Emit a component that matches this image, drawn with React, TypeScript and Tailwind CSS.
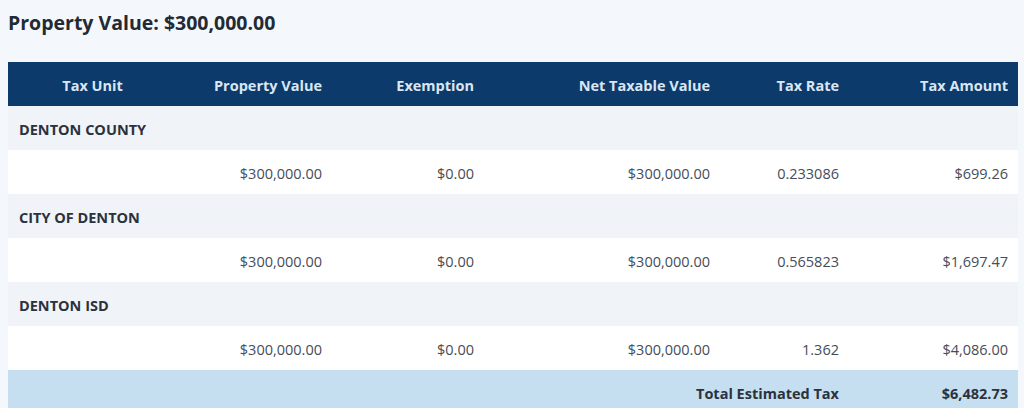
import React from 'react';

interface TaxUnit {
  name: string;
  propertyValue: string;
  exemption: string;
  netTaxable: string;
  rate: string;
  amount: string;
}

const units: TaxUnit[] = [
  { name: 'DENTON COUNTY', propertyValue: '$300,000.00', exemption: '$0.00', netTaxable: '$300,000.00', rate: '0.233086', amount: '$699.26' },
  { name: 'CITY OF DENTON', propertyValue: '$300,000.00', exemption: '$0.00', netTaxable: '$300,000.00', rate: '0.565823', amount: '$1,697.47' },
  { name: 'DENTON ISD', propertyValue: '$300,000.00', exemption: '$0.00', netTaxable: '$300,000.00', rate: '1.362', amount: '$4,086.00' },
];

const cell = 'h-[44px] px-[10px] pt-[3px] text-right';

export default function App() {
  return (
    <div className="min-h-screen bg-[#f4f8fd] pl-[8px] pt-[9px] font-['Open_Sans',sans-serif]">
      <h2 className="text-[19.5px] font-bold leading-[28px] text-[#232a33]">Property Value: $300,000.00</h2>

      <table className="mt-[25px] w-[1010px] table-fixed border-collapse text-[14.5px]">
        <colgroup>
          <col className="w-[169px]" />
          <col className="w-[155px]" />
          <col className="w-[152px]" />
          <col className="w-[236px]" />
          <col className="w-[129px]" />
          <col />
        </colgroup>
        <thead>
          <tr className="bg-[#0b3a6b] text-[#dbe6f3] font-bold">
            <th className="h-[44px] px-[10px] pt-[3px] text-center">Tax Unit</th>
            <th className={cell}>Property Value</th>
            <th className={cell}>Exemption</th>
            <th className={cell}>Net Taxable Value</th>
            <th className={cell}>Tax Rate</th>
            <th className={cell}>Tax Amount</th>
          </tr>
        </thead>
        <tbody>
          {units.map(u => (
            <React.Fragment key={u.name}>
              <tr className="bg-[#f0f4f9]">
                <td colSpan={6} className="h-[44px] px-[11px] pt-[3px] text-left font-bold text-[#2b323d]">{u.name}</td>
              </tr>
              <tr className="bg-white text-[#464d59]">
                <td className="h-[44px]"></td>
                <td className={cell}>{u.propertyValue}</td>
                <td className={cell}>{u.exemption}</td>
                <td className={cell}>{u.netTaxable}</td>
                <td className={cell}>{u.rate}</td>
                <td className={cell}>{u.amount}</td>
              </tr>
            </React.Fragment>
          ))}
          <tr className="bg-[#c5dff0] font-bold text-[#2b323d]">
            <td colSpan={5} className={cell}>Total Estimated Tax</td>
            <td className={cell}>$6,482.73</td>
          </tr>
        </tbody>
      </table>
    </div>
  );
}
